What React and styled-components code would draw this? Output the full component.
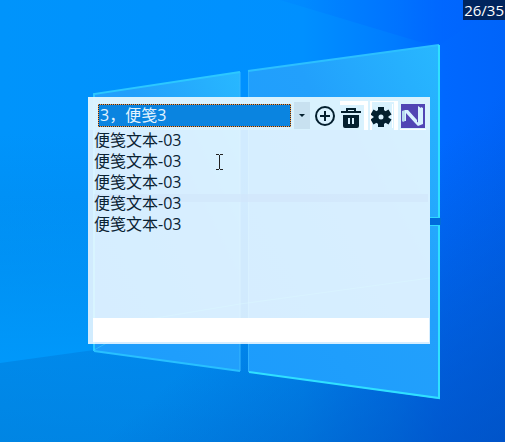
import React, { useState } from 'react';
import styled, { createGlobalStyle } from 'styled-components';

const GlobalStyle = createGlobalStyle`
  * {
    box-sizing: border-box;
  }
  body {
    margin: 0;
    font-family: 'Open Sans', 'Noto Sans CJK SC', sans-serif;
    background: #0078e8;
  }
`;
const Desktop = styled.main`
  position: relative;
  min-height: 100vh;
  padding: 97px 75px 98px 88px;
  overflow: hidden;
`;
const WallpaperSvg = styled.svg`
  position: absolute;
  inset: 0;
  width: 100%;
  height: 100%;
`;
const Counter = styled.div`
  position: absolute;
  top: 0;
  right: 0;
  padding: 0 1px;
  font-size: 15px;
  line-height: 20px;
  color: white;
  background-color: #00255e;
`;
const NoteWindow = styled.section`
  position: relative;
  display: flex;
  flex-direction: column;
  background-color: rgba(255, 255, 255, 0.82);
`;
const Toolbar = styled.div`
  display: flex;
  align-items: center;
  gap: 2px;
  height: 33px;
  padding: 4px 4px 0 10px;
  background-color: rgba(218, 242, 254, 0.8);
`;
const Picker = styled.label`
  display: flex;
  align-items: center;
  flex: 1;
  min-width: 0;
  gap: 3px;
`;
const NoteSelect = styled.select`
  flex: 1;
  min-width: 0;
  height: 23px;
  padding: 0 1px;
  appearance: none;
  border: 1px dotted #ff9a3c;
  border-radius: 0;
  outline: none;
  background-color: #0a84e0;
  background-clip: padding-box;
  color: #e2f4ff;
  font-family: inherit;
  font-size: 16px;
  line-height: 21px;
`;
// dark line that shows between the dots of the focus border
const FocusFrame = styled.span`
  display: flex;
  flex: 1;
  min-width: 0;
  background-color: #14304a;
`;
const Arrow = styled.span`
  display: flex;
  align-items: center;
  justify-content: center;
  width: 16px;
  height: 27px;
  background-color: #c8e1f0;
`;
const ToolButton = styled.button`
  display: flex;
  align-items: center;
  width: ${(props) => (props.$narrow ? '26px' : '28px')};
  height: 29px;
  padding: 0 0 0 1px;
  border: none;
  box-shadow: ${(props) => props.$edge || 'none'};
  background: none;
  color: #04202e;
  cursor: pointer;
`;
const Editor = styled.textarea`
  display: block;
  height: 188px;
  margin: 0 3px 0 4px;
  padding: 0 2px;
  border: none;
  outline: none;
  resize: none;
  overflow: hidden;
  background: none;
  color: #0a2233;
  font-family: inherit;
  font-size: 16px;
  line-height: 21px;
`;
const StatusBar = styled.div`
  height: 24px;
  margin: 0 1px 2px 5px;
  background-color: white;
`;
const Pointer = styled.svg`
  position: absolute;
  top: 57px;
  left: 128px;
  pointer-events: none;
`;

const Wallpaper = () => (
  <WallpaperSvg viewBox="0 0 505 442" preserveAspectRatio="none" aria-hidden="true">
    <defs>
      <linearGradient id="sky" x1="0" y1="0" x2="1" y2="0">
        <stop offset="0" stopColor="#0094fb" />
        <stop offset="0.6" stopColor="#0090ff" />
        <stop offset="0.78" stopColor="#007cff" />
        <stop offset="0.88" stopColor="#0068ff" />
        <stop offset="1" stopColor="#0064fa" />
      </linearGradient>
      <linearGradient id="shade" x1="0" y1="0" x2="0" y2="1">
        <stop offset="0.3" stopColor="#0068b4" stopOpacity="0" />
        <stop offset="1" stopColor="#006ab8" stopOpacity="0.35" />
      </linearGradient>
      <linearGradient id="corner" x1="0" y1="0" x2="1" y2="1">
        <stop offset="0.6" stopColor="#0048b8" stopOpacity="0" />
        <stop offset="1" stopColor="#0048b8" stopOpacity="0.6" />
      </linearGradient>
      <linearGradient id="ray" x1="0" y1="0" x2="1" y2="0">
        <stop offset="0" stopColor="#0068ff" stopOpacity="0.1" />
        <stop offset="1" stopColor="#0064ff" stopOpacity="0.6" />
      </linearGradient>
      <linearGradient id="glow" x1="0" y1="0" x2="0" y2="1">
        <stop offset="0" stopColor="#009cff" stopOpacity="0" />
        <stop offset="1" stopColor="#009cff" stopOpacity="0.8" />
      </linearGradient>
      <linearGradient id="pane" x1="0" y1="1" x2="1" y2="0">
        <stop offset="0" stopColor="#1c9cfc" />
        <stop offset="0.6" stopColor="#22a0fc" />
        <stop offset="1" stopColor="#28b8ff" />
      </linearGradient>
    </defs>
    <rect width="505" height="442" fill="url(#sky)" />
    <rect width="505" height="442" fill="url(#shade)" />
    <rect width="505" height="442" fill="url(#corner)" />
    <path d="M280 0L420 42L440 45L505 0Z" fill="url(#ray)" />
    <path d="M0 200H94V350L0 363Z" fill="url(#glow)" />
    <path d="M94 94L240 72V371L94 351Z" fill="url(#pane)" />
    <path d="M248 71L440 45V399L249 372Z" fill="url(#pane)" />
    <path d="M240 72V371" stroke="#39b8ff" />
    <path d="M248.5 71V372" stroke="#30b0ff" />
    <path d="M94 351V94L240 72" fill="none" stroke="#2cc8ff" strokeWidth="2" />
    <path d="M248 71L439 45" fill="none" stroke="#2cc0ff" strokeWidth="2" />
    <path d="M94 351L240 371" fill="none" stroke="#28c0ff" strokeWidth="2" />
    <path d="M249 372L439 398V45" fill="none" stroke="#30e0ff" strokeWidth="2" />
    <path d="M94 350L150 319L240 304L430 278" fill="none" stroke="#38d8ff" opacity="0.5" />
    <path d="M94 194H428V202H94Z" fill="#0476e6" opacity="0.7" />
    <path d="M430 218H441V225H430Z" fill="#006cdc" />
    <path d="M430 217.5H440M430 225.5H440" stroke="#30d8ff" />
  </WallpaperSvg>
);

const AddIcon = () => (
  <svg width="24" height="24" viewBox="0 0 24 24" fill="none" stroke="currentColor" strokeWidth="2">
    <circle cx="12" cy="12" r="9" />
    <path d="M12 7V17M7 12H17" />
  </svg>
);
const TrashIcon = () => (
  <svg width="20" height="24" viewBox="0 0 20 24">
    <path
      fill="currentColor"
      fillRule="evenodd"
      d="M5 4H15V7H20V9H0V7H5ZM7 6V7H13V6ZM2 11H18V22Q18 24 16 24H4Q2 24 2 22ZM7 14V20H9V14ZM11 14V20H13V14Z"
    />
  </svg>
);
const GearIcon = () => (
  <svg width="22" height="24" viewBox="0 0 22 24">
    <g stroke="currentColor" fill="none">
      <circle cx="10" cy="13" r="5" strokeWidth="5" />
      <path
        d="M10 3V8M10 18V23M1 8L6 11M14 15L19 18M1 18L6 15M14 11L19 8"
        strokeWidth="6"
      />
    </g>
    <path d="M21.5 0V24" stroke="white" />
  </svg>
);
const NotesIcon = () => (
  <svg width="24" height="24" viewBox="0 0 24 24">
    <path fill="#5145b4" d="M0 0H24V24H0Z" />
    <path fill="#b8dcee" d="M1 7L4 6V17L2 18L1 17Z" />
    <path fill="#d7f2ff" d="M4 6H7L16 16V19L14 19L5 9V17H4Z" />
    <path fill="#d7f2ff" d="M17 2L20 4V3L22 4V20L17 22L14 19L17 18Z" />
  </svg>
);

const notes = [1, 2, 3].map((n) => `${n}\uFF0C便笺${n}`);
const noteText = Array(5).fill('便笺文本-03').join('\n');

export default function App() {
  const [note, setNote] = useState(notes[2]);
  const [text, setText] = useState(noteText);

  return (
    <>
      <GlobalStyle />
      <Desktop>
        <Wallpaper />
        <Counter>26/35</Counter>
        <NoteWindow>
          <Toolbar>
            <Picker>
              <FocusFrame>
                <NoteSelect
                  aria-label="便笺"
                  value={note}
                  onChange={(e) => setNote(e.target.value)}
                >
                  {notes.map((name) => (
                    <option key={name}>{name}</option>
                  ))}
                </NoteSelect>
              </FocusFrame>
              <Arrow>
                <svg width="6" height="3" viewBox="0 0 6 3">
                  <path d="M0 0H6L3 3Z" fill="#04202e" />
                </svg>
              </Arrow>
            </Picker>
            <ToolButton $narrow aria-label="添加">
              <AddIcon />
            </ToolButton>
            <ToolButton
              $edge="inset 0 4px white, inset -4px 0 white"
              aria-label="删除"
            >
              <TrashIcon />
            </ToolButton>
            <ToolButton
              $edge="inset 2px 1px white, inset -4px 0 white"
              aria-label="设置"
            >
              <GearIcon />
            </ToolButton>
            <ToolButton $narrow $edge="inset 0 -1px white" aria-label="便笺应用">
              <NotesIcon />
            </ToolButton>
          </Toolbar>
          <Editor
            aria-label="便笺文本"
            spellCheck={false}
            value={text}
            onChange={(e) => setText(e.target.value)}
          />
          <StatusBar />
          <Pointer width="7" height="16" viewBox="0 0 7 16" aria-hidden="true">
            <path
              d="M0 0.5H3M4 0.5H7M3.5 1V15M0 15.5H3M4 15.5H7"
              stroke="#222"
              fill="none"
            />
          </Pointer>
        </NoteWindow>
      </Desktop>
    </>
  );
}
